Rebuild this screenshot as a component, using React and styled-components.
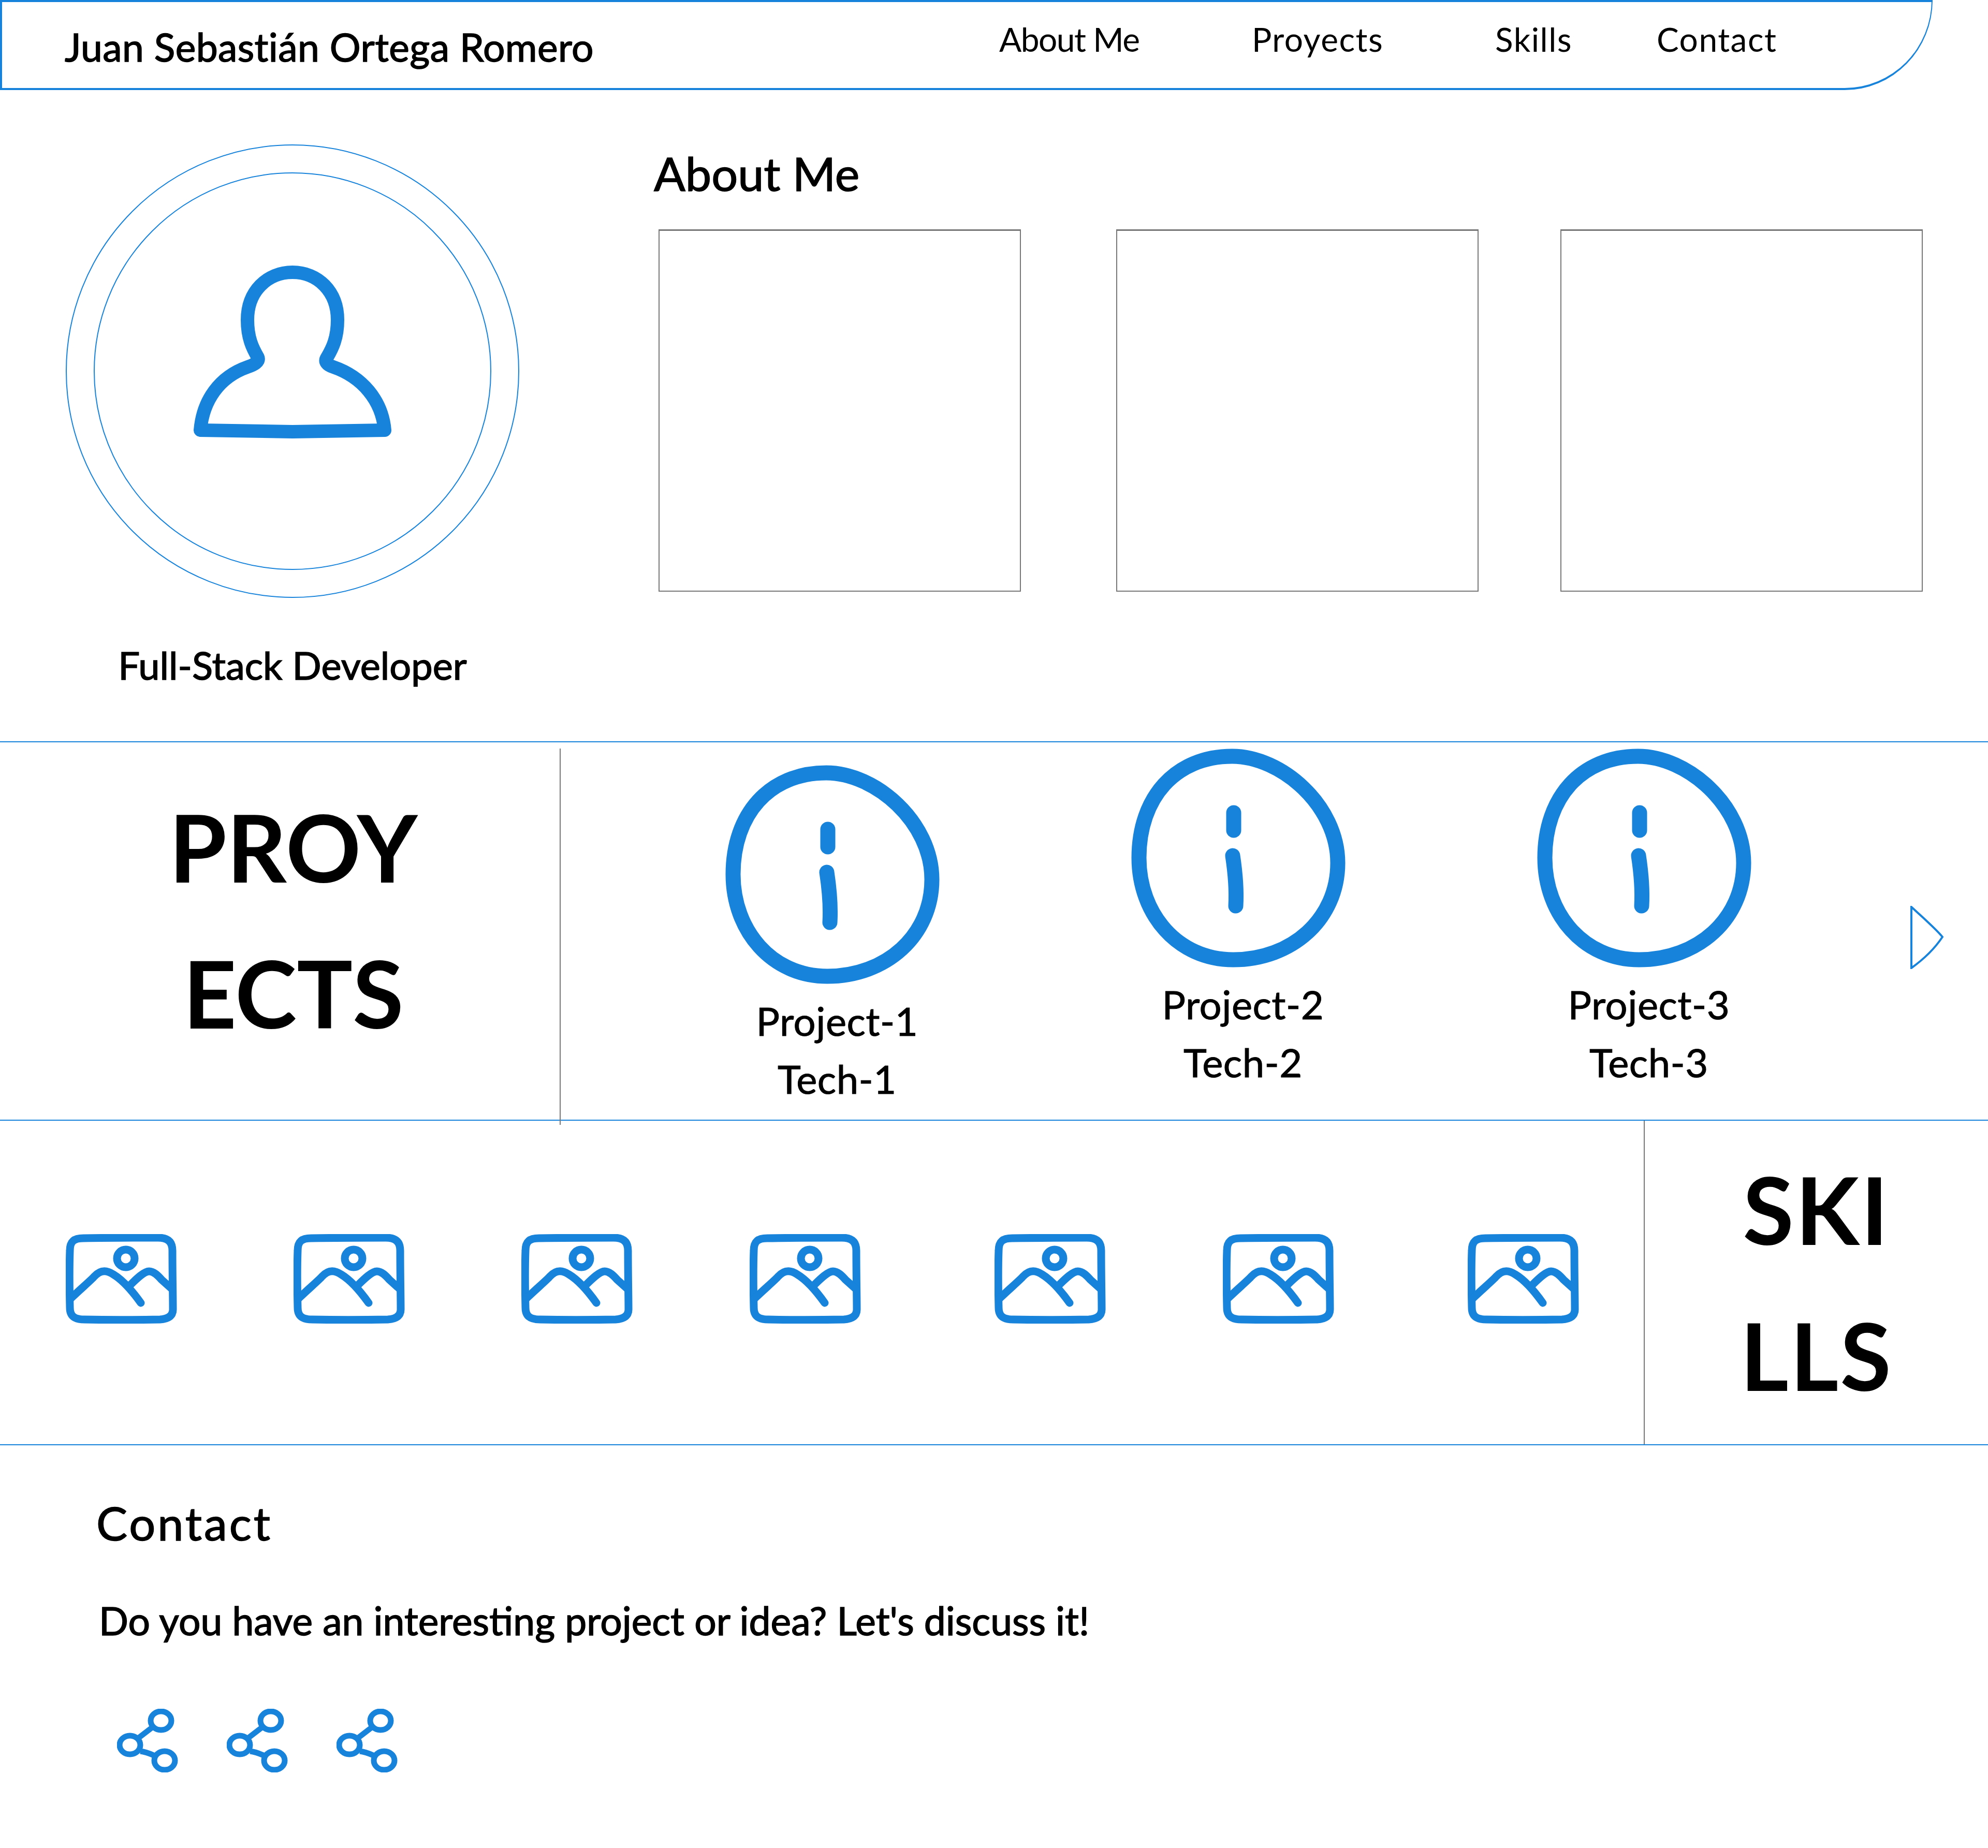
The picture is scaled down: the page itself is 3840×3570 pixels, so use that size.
import React from 'react';
import styled, { createGlobalStyle } from 'styled-components';

const BLUE = '#1783da';
const GRAY = '#777777';

const GlobalStyle = createGlobalStyle`
  html, body {
    margin: 0;
    padding: 0;
    background: #fff;
    color: #000;
    font-family: 'Lato', 'Open Sans', sans-serif;
  }
  * { box-sizing: border-box; }
`;

const Page = styled.div`
  width: 3840px;
  height: 3570px;
  overflow: hidden;
`;

const NavBar = styled.nav`
  width: 3733px;
  height: 174px;
  display: flex;
  border: 4px solid ${BLUE};
  border-right-width: 2px;
  border-bottom-right-radius: 170px 174px;
`;

const Brand = styled.div`
  width: 1926px;
  padding: 40px 0 0 121px;
  font-size: 75px;
  line-height: 92px;
  letter-spacing: 0.4px;
  -webkit-text-stroke: 1.5px #000;
  white-space: nowrap;
`;

const NavList = styled.div`
  display: grid;
  grid-template-columns: 488px 470px 312px auto;
  padding-top: 33px;
`;

const NavLink = styled.a`
  font-size: 64px;
  line-height: 78px;
  letter-spacing: ${(p) => p.$track}px;
  white-space: nowrap;
`;

const Hero = styled.section`
  height: 1260px;
  display: flex;
  border-bottom: 2px solid ${BLUE};
`;

const Profile = styled.div`
  width: 1130px;
  padding-top: 105px;
  display: flex;
  flex-direction: column;
  align-items: center;
`;

const OuterRing = styled.div`
  width: 876px;
  height: 876px;
  border: 2px solid ${BLUE};
  border-radius: 50%;
  display: flex;
  align-items: center;
  justify-content: center;
`;

const InnerRing = styled.div`
  width: 768px;
  height: 768px;
  border: 2px solid ${BLUE};
  border-radius: 50%;
  display: flex;
  align-items: center;
  justify-content: center;
  padding-bottom: 74px;
`;

const Role = styled.div`
  margin-top: 87px;
  font-size: 74px;
  line-height: 86px;
  -webkit-text-stroke: 1.5px #000;
  white-space: nowrap;
`;

const About = styled.div`
  flex: 1;
  padding: 105px 0 0 133px;
`;

const Heading = styled.h2`
  margin: 0;
  font-size: 90px;
  line-height: 110px;
  font-weight: 400;
  -webkit-text-stroke: 1.5px #000;
  white-space: nowrap;
`;

const ContactHeading = styled(Heading)`
  letter-spacing: 4px;
`;

const PhotoRow = styled.div`
  display: flex;
  margin: 54px 0 0 9px;
`;

const Photo = styled.div`
  width: 700px;
  height: 700px;
  border: 2px solid ${GRAY};
  border-top-width: 3px;
  margin-left: ${(p) => p.$offset || 0}px;
`;

const Projects = styled.section`
  height: 731px;
  display: flex;
  border-bottom: 2px solid ${BLUE};
`;

const SideTitle = styled.div`
  display: flex;
  flex-direction: column;
  align-items: center;
  justify-content: center;
  font-size: 180px;
  line-height: 282px;
  font-weight: 700;
`;

const ProjectsTitle = styled(SideTitle)`
  width: 1083px;
  margin: 12px 0 -10px;
  padding: 0 0 68px 52px;
  border-right: 2px solid ${GRAY};
`;

const ProjectList = styled.div`
  flex: 1;
  display: flex;
  padding-left: 318px;
`;

const ProjectCard = styled.div`
  width: 414px;
  margin-right: 370px;
  padding-top: ${(p) => p.$top}px;
  display: flex;
  flex-direction: column;
  align-items: center;
`;

const InfoIcon = styled.svg`
  width: 414px;
  height: 423px;
  display: block;
  flex-shrink: 0;
`;

const ProjectText = styled.div`
  margin: 15px 0 0 18px;
  font-size: 76px;
  line-height: 112px;
  letter-spacing: 0.5px;
  -webkit-text-stroke: 1px #000;
  text-align: center;
  white-space: nowrap;
`;

const NextArrow = styled.svg`
  position: absolute;
  left: 3690px;
  top: 1750px;
  width: 66px;
  height: 122px;
`;

const Skills = styled.section`
  height: 627px;
  display: flex;
  border-bottom: 2px solid ${BLUE};
`;

const SkillIcons = styled.div`
  width: 3175px;
  padding: 219px 0 0 127px;
  display: flex;
  align-items: flex-start;
`;

const SkillIcon = styled.svg`
  width: 215px;
  height: 173px;
  flex-shrink: 0;
  margin-left: ${(p) => p.$offset || 0}px;
`;

const SkillsTitle = styled(SideTitle)`
  flex: 1;
  border-left: 2px solid ${GRAY};
  padding-bottom: 4px;
  letter-spacing: 3px;
`;

const Contact = styled.section`
  padding: 94px 0 0 186px;
`;

const Lead = styled.p`
  margin: 91px 0 0 5px;
  font-size: 75px;
  line-height: 86px;
  -webkit-text-stroke: 1.5px #000;
  white-space: nowrap;
`;

const ShareRow = styled.div`
  display: flex;
  gap: 94px;
  margin: 128px 0 0 40px;
`;

const ShareIcon = styled.svg`
  width: 118px;
  height: 123px;
  display: block;
`;

const Person = () => (
  <svg width="382" height="334" viewBox="0 0 382 334" fill="none" stroke={BLUE} strokeWidth="26" strokeLinejoin="round">
    <path d="M13 318 L191 321 L369 318 C364 260 325 215 270 196 C258 192 252 186 258 177 C268 160 278 140 278 105 C278 50 240 13 191 13 C142 13 104 50 104 105 C104 140 114 160 124 177 C128 186 116 192 104 196 C50 215 18 260 13 318 Z" />
  </svg>
);

const Info = () => (
  <InfoIcon viewBox="0 0 414 423" fill="none" stroke={BLUE} strokeWidth="29" strokeLinecap="round">
    <path d="M195 15 C290 15 399 110 399 221 C399 330 310 408 197 408 C90 408 15 320 15 211 C15 95 85 15 195 15 Z" />
    <path d="M198 124 L198 158" />
    <path d="M196 207 C201 240 204 270 202 304" />
  </InfoIcon>
);

const Picture = ({ offset }) => (
  <SkillIcon $offset={offset} viewBox="0 0 215 173" fill="none" stroke={BLUE} strokeWidth="15" strokeLinecap="round">
    <path d="M34 8 C90 7 140 7 178 7 C196 7 206 14 206 32 C206 80 207 120 207 146 C207 158 198 164 182 165 C130 166 80 166 36 165 C16 165 8 158 8 142 C7 100 7 60 8 32 C8 14 16 8 34 8 Z" />
    <circle cx="116" cy="47" r="17" />
    <path d="M9 125 C30 105 50 88 55 82 C68 68 80 70 92 78 C112 90 130 112 145 133" />
    <path d="M124 99 C138 85 152 72 161 72 C170 72 178 80 185 88 L205 106" />
  </SkillIcon>
);

const Share = () => (
  <ShareIcon viewBox="0 0 118 123" fill="none" stroke={BLUE} strokeWidth="11">
    <ellipse cx="85" cy="23" rx="20" ry="18" />
    <ellipse cx="25" cy="70" rx="20" ry="18" />
    <ellipse cx="92" cy="100" rx="20" ry="18" />
    <path d="M42 56 L68 36" />
    <path d="M45 82 C54 83 62 86 71 90" />
  </ShareIcon>
);

const navLinks = [
  { label: 'About Me', track: -1.5 },
  { label: 'Proyects', track: 1.5 },
  { label: 'Skills', track: 1.5 },
  { label: 'Contact', track: 1.5 },
];

const projects = [
  { id: 1, top: 44 },
  { id: 2, top: 12 },
  { id: 3, top: 12 },
];

const skillOffsets = [0, 225, 225, 226, 258, 226, 258];

const App = () => (
  <Page>
    <GlobalStyle />
    <NavBar>
      <Brand>Juan Sebastián Ortega Romero</Brand>
      <NavList>
        {navLinks.map((l) => (
          <NavLink key={l.label} $track={l.track}>{l.label}</NavLink>
        ))}
      </NavList>
    </NavBar>

    <Hero>
      <Profile>
        <OuterRing>
          <InnerRing>
            <Person />
          </InnerRing>
        </OuterRing>
        <Role>Full-Stack Developer</Role>
      </Profile>
      <About>
        <Heading>About Me</Heading>
        <PhotoRow>
          <Photo />
          <Photo $offset={184} />
          <Photo $offset={158} />
        </PhotoRow>
      </About>
    </Hero>

    <Projects>
      <ProjectsTitle>
        <div>PROY</div>
        <div>ECTS</div>
      </ProjectsTitle>
      <ProjectList>
        {projects.map((p) => (
          <ProjectCard key={p.id} $top={p.top}>
            <Info />
            <ProjectText>
              Project-{p.id}
              <br />
              Tech-{p.id}
            </ProjectText>
          </ProjectCard>
        ))}
      </ProjectList>
      <NextArrow viewBox="0 0 66 122" fill="none" stroke={BLUE} strokeWidth="4">
        <path d="M2 2 C30 28 50 45 62 60 C50 78 30 100 2 120 Z" />
      </NextArrow>
    </Projects>

    <Skills>
      <SkillIcons>
        {skillOffsets.map((o, i) => (
          <Picture key={i} offset={o} />
        ))}
      </SkillIcons>
      <SkillsTitle>
        <div>SKI</div>
        <div>LLS</div>
      </SkillsTitle>
    </Skills>

    <Contact>
      <ContactHeading>Contact</ContactHeading>
      <Lead>Do you have an interesting project or idea? Let's discuss it!</Lead>
      <ShareRow>
        <Share />
        <Share />
        <Share />
      </ShareRow>
    </Contact>
  </Page>
);

export default App;
